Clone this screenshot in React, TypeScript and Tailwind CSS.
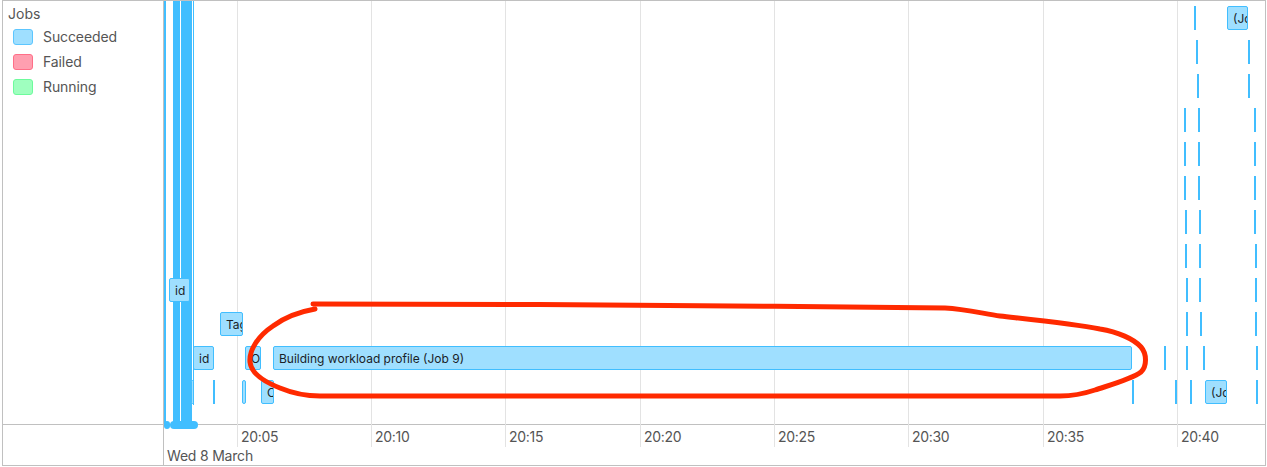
import React from 'react';

// x positions are page pixels, the timeline column starts at x=164
const originX = 164;
const rowTop = (row: number) => 5 + row * 34;

const legend = [
  { label: 'Succeeded', swatch: 'bg-[#9fdfff] border-[#5cc6ff]' },
  { label: 'Failed', swatch: 'bg-[#ff9fb0] border-[#ff6f88]' },
  { label: 'Running', swatch: 'bg-[#9fffbf] border-[#6dfb9c]' },
];

const ticks = [
  { x: 237, label: '20:05' },
  { x: 371, label: '20:10' },
  { x: 505, label: '20:15' },
  { x: 640, label: '20:20' },
  { x: 774, label: '20:25' },
  { x: 908, label: '20:30' },
  { x: 1043, label: '20:35' },
  { x: 1177, label: '20:40' },
];

// thin jobs, too short to show a label: [row, x]
const slivers: [number, number][] = [
  [0, 1194],
  [1, 1196], [1, 1248],
  [2, 1197], [2, 1248],
  [3, 1184], [3, 1198], [3, 1254],
  [4, 1184], [4, 1198], [4, 1254],
  [5, 1184], [5, 1198], [5, 1254],
  [6, 1185], [6, 1199], [6, 1254],
  [7, 1185], [7, 1199], [7, 1255],
  [8, 1186], [8, 1199], [8, 1255],
  [9, 1186], [9, 1200], [9, 1255],
  [10, 1164], [10, 1186], [10, 1203], [10, 1256],
  [11, 213], [11, 1132], [11, 1175], [11, 1190], [11, 1256],
];

const jobs = [
  { row: 0, x: 1227, w: 21, label: '(Job 14)' },
  { row: 8, x: 169, w: 21, label: 'id : 4' },
  { row: 9, x: 220, w: 23, label: 'Tagging' },
  { row: 10, x: 193, w: 21, label: 'id : 7' },
  { row: 10, x: 245, w: 16, label: 'Optimizing' },
  { row: 10, x: 273, w: 859, label: 'Building workload profile (Job 9)' },
  { row: 11, x: 191, w: 3, label: '' },
  { row: 11, x: 242, w: 4, label: '' },
  { row: 11, x: 261, w: 13, label: 'Collecting' },
  { row: 11, x: 1205, w: 22, label: '(Job 12)' },
];

// long running jobs at the start of the run
const columns = [
  { x: 164, w: 1.5, h: 424 },
  { x: 173, w: 7, h: 424 },
  { x: 181, w: 11, h: 424 },
  { x: 193, w: 1, h: 404 },
];

const App = () => {
  return (
    <div className="relative ml-[2px] w-[1264px] h-[466px] flex border border-[#c0c0c0] bg-white font-['Inter',sans-serif] text-sm text-[#555555]">
      <div className="w-[161px] flex flex-col border-r border-[#c0c0c0]">
        <div className="h-[423px] pl-[5px] pt-[4px]">
          <div className="leading-[17px] mb-[7px]">Jobs</div>
          <div className="flex flex-col gap-[9px] pl-[5px]">
            {legend.map((item) => (
              <div key={item.label} className="flex items-center gap-[10px] h-4">
                <div className={`w-5 h-4 rounded-[3px] border ${item.swatch}`}></div>
                <span className="tracking-[-0.1px]">{item.label}</span>
              </div>
            ))}
          </div>
        </div>
        <div className="border-t border-[#c0c0c0]"></div>
      </div>

      <div className="relative flex-1 flex flex-col">
        <div className="h-[423px]"></div>
        <div className="border-t border-[#c0c0c0]"></div>
        <div className="flex-1 flex items-end pl-[3px] pb-[1px]">
          <span className="leading-[17px] tracking-[-0.2px]">Wed 8 March</span>
        </div>

        {ticks.map((tick) => (
          <div key={tick.x} className="absolute top-0 h-[446px] border-l border-[#e3e3e3]" style={{ left: tick.x - originX }}>
            <span className="absolute left-[3px] top-[427px] leading-[17px] tracking-[-0.3px]">{tick.label}</span>
          </div>
        ))}

        {columns.map((col) => (
          <div key={col.x} className="absolute top-0 bg-[#41beff]" style={{ left: col.x - originX, width: col.w, height: col.h }}></div>
        ))}
        <div className="absolute left-0 top-[420px] w-[6px] h-2 rounded-full bg-[#41beff]"></div>
        <div className="absolute left-[6px] top-[420px] w-[28px] h-2 rounded-full bg-[#41beff]"></div>

        {slivers.map(([row, x]) => (
          <div key={`${row}-${x}`} className="absolute w-[2px] h-6 bg-[#41beff]" style={{ left: x - originX, top: rowTop(row) }}></div>
        ))}

        {jobs.map((job) => (
          <div
            key={job.x}
            className="absolute h-6 overflow-hidden whitespace-nowrap rounded-[2px] border border-[#41beff] bg-[#9fdfff] text-xs leading-[23px] text-[#1a2227]"
            style={{ left: job.x - originX, top: rowTop(job.row), width: job.w }}
          >
            <span className="ml-[5px]">{job.label}</span>
          </div>
        ))}
      </div>

      {/* hand drawn annotation over the chart */}
      <svg className="absolute -left-[3px] -top-[1px] pointer-events-none" width="1267" height="467" fill="none">
        <path
          d="M313 304 L540 304.5 C700 305 800 307 945 308 C965 309 985 314 1000 316 C1045 321 1075 324 1100 329 C1118 332 1134 339 1141 347 C1147 354 1147 366 1141 372 C1132 379 1110 385 1095 390 C1080 395 1072 396 1060 396 L320 396 C305 396 292 393 280 388 C262 381 251 372 250 362 C249 350 258 336 273 326 C285 317 298 312 315 309"
          stroke="#ff2a00"
          strokeWidth="5"
          strokeLinecap="round"
          strokeLinejoin="round"
        />
      </svg>
    </div>
  );
};

export default App;
